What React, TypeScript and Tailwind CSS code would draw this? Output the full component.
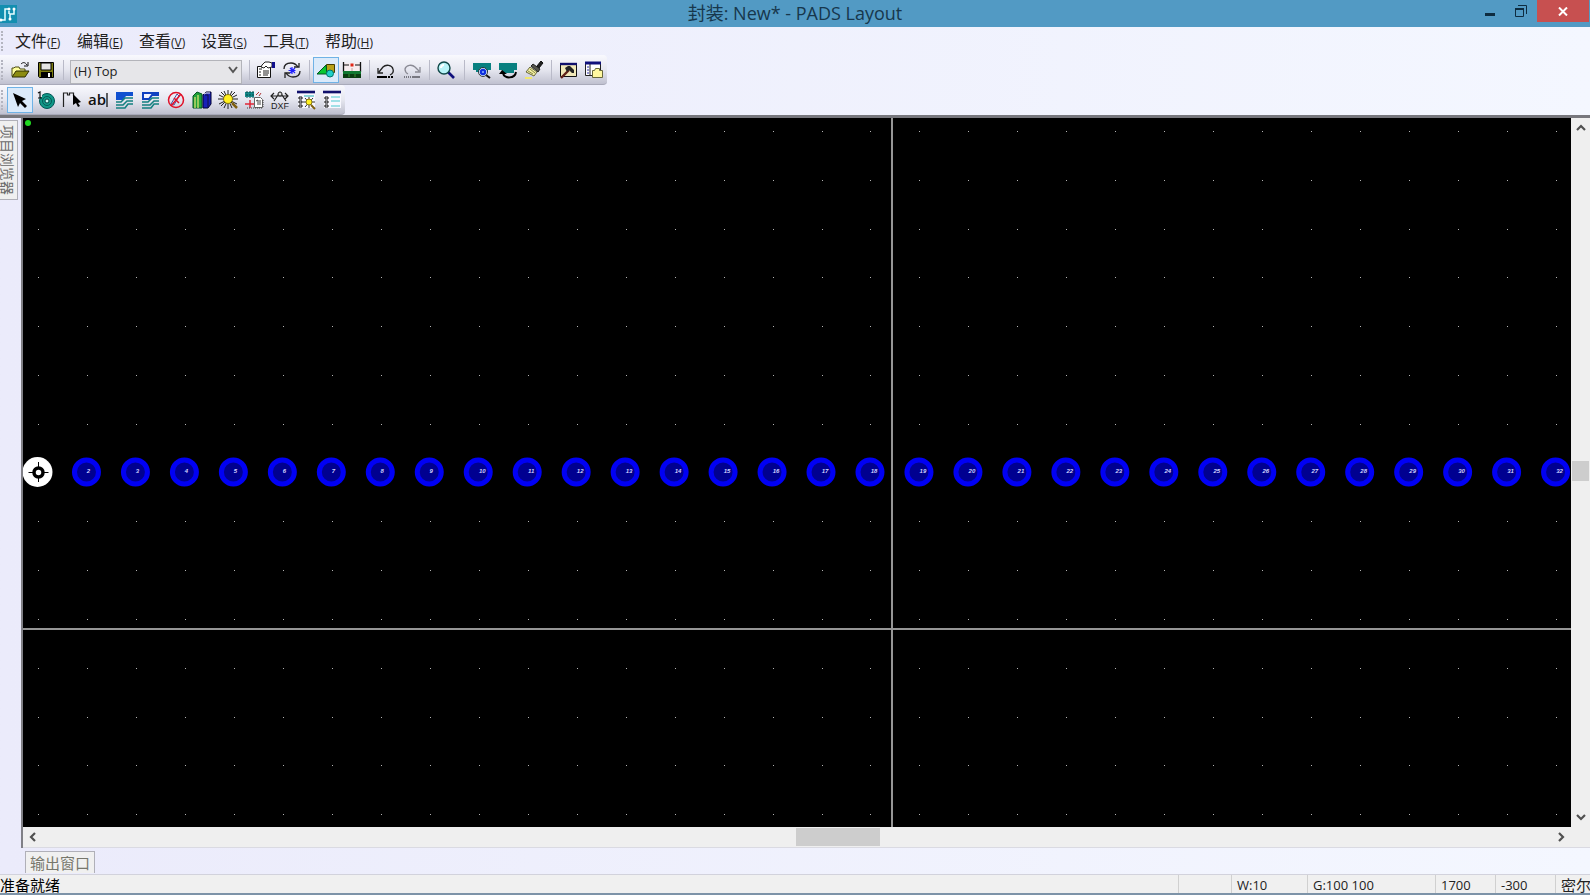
import type { ReactNode } from "react";
import clsx from "clsx";

const menus = [
  { label: "文件", hotkey: "F" },
  { label: "编辑", hotkey: "E" },
  { label: "查看", hotkey: "V" },
  { label: "设置", hotkey: "S" },
  { label: "工具", hotkey: "T" },
  { label: "帮助", hotkey: "H" },
];

const PITCH_X = 48.97;
const PITCH_Y = 48.8;
const ORIGIN = { x: 15, y: 354 };
const PAD_COUNT = 32;

function Icon({ children }: { children: ReactNode }) {
  return (
    <svg width="20" height="20" viewBox="0 0 20 20" fill="none" aria-hidden="true">
      {children}
    </svg>
  );
}

const icons = {
  open: (
    <Icon>
      <path d="M2 16V8h2l1-1h4l1 2h5v3" fill="#ffff9c" stroke="#4c4c10" />
      <path d="M2 17l4-6h13l-4 6z" fill="#8c8c10" stroke="#2c2c00" />
      <path d="M11 4c2-2 4-2 6 1M18 2v4h-4" stroke="#111" />
    </Icon>
  ),
  save: (
    <Icon>
      <path d="M2.500 2.500h15v15h-14l-1-1z" fill="#7c7c10" stroke="#000" />
      <path d="M5 3h10v7H5z" fill="#e4e4e4" stroke="#000" />
      <path d="M5 12h11v5H5z" fill="#000" />
      <path d="M12 13h2v4h-2z" fill="#fff" />
    </Icon>
  ),
  properties: (
    <Icon>
      <path d="M1.500 6.500h13v11h-13z" fill="#fff" stroke="#111" />
      <path d="M3 9h3M3 12h2M3 15h2M7 11h6M7 13h6M7 15h5" stroke="#222" />
      <path d="M6 5l3-3h4l3 1v4l-4 1-2-2-2 2-3-1z" fill="#fff" stroke="#222" />
      <path d="M16 2h3v6h-3z" fill="#10108c" />
    </Icon>
  ),
  cycle: (
    <Icon>
      <path d="M2 9c0-4 3-6 7-6 3 0 5 1 7 4M18 11c0 4-3 6-7 6-3 0-5-1-7-4" stroke="#222" strokeWidth="1.300" />
      <path d="M17 3v4h-5M3 18v-5h5" stroke="#222" strokeWidth="1.300" />
      <path d="M10 7v7M6.500 10.500h7M8 8l5 5M13 8l-5 5" stroke="#2020ff" strokeWidth="1.200" />
    </Icon>
  ),
  drafting: (
    <Icon>
      <path d="M10.500 4.500h8v8h-8z" fill="#b8a018" stroke="#443c00" />
      <path d="M1 14l9-9 1 9z" fill="#08c830" stroke="#052" />
      <circle cx="14" cy="13.500" r="3.500" fill="#20d0c8" stroke="#076" />
    </Icon>
  ),
  board: (
    <Icon>
      <path d="M2 3h16v8H2z" fill="#f6ecee" />
      <path d="M1.500 2v10M18.500 2v10" stroke="#111" strokeWidth="1.300" />
      <path d="M2 5h5M13 5h5" stroke="#111" />
      <path d="M8.500 3.500h3v3h-3z" fill="#e02818" />
      <path d="M10 8v3" stroke="#c8a0a0" />
      <path d="M1 11h18v4H1z" fill="#107830" />
      <path d="M1 14h18v4H1z" fill="#093c10" />
      <path d="M7 14v3M13 14v3" stroke="#38902c" />
    </Icon>
  ),
  undo: (
    <Icon>
      <path d="M2 8v5h5M3 12l4-5c3-3 9-2 10 2 1 3-1 5-3 6" stroke="#222" strokeWidth="1.300" />
      <path d="M1 17h10" stroke="#000" strokeWidth="2" />
      <path d="M12 17h6" stroke="#000" strokeWidth="2" strokeDasharray="2 1" />
    </Icon>
  ),
  redo: (
    <Icon>
      <path d="M18 7v5h-5M17 11l-4-4c-3-3-9-2-10 2 0 2 1 4 3 5" stroke="#8a8a94" strokeWidth="1.300" />
      <path d="M2 17h7" stroke="#777780" strokeWidth="2" strokeDasharray="1 1" />
      <path d="M10 17h8" stroke="#777780" strokeWidth="2" />
    </Icon>
  ),
  zoom: (
    <Icon>
      <path d="M12 12l6 6" stroke="#10107c" strokeWidth="2.600" />
      <circle cx="8" cy="8" r="6" fill="#b8f4f8" stroke="#104848" strokeWidth="1.400" />
      <path d="M5 8c0-2 1-3 3-3" stroke="#fff" strokeWidth="2" />
    </Icon>
  ),
  view: (
    <Icon>
      <path d="M1 3h18v7h-3v2H4v-2H1z" fill="#088080" />
      <path d="M14 15l4 3" stroke="#111" strokeWidth="2" />
      <circle cx="11" cy="12" r="4.500" fill="#d8f0ff" stroke="#111" strokeWidth="0.800" />
      <circle cx="11" cy="12" r="3.200" fill="#1030e0" />
      <circle cx="11" cy="12" r="1" fill="#90b8ff" />
    </Icon>
  ),
  redraw: (
    <Icon>
      <path d="M1 3h18v7h-3v3H4v-3H1z" fill="#088080" />
      <path d="M5 13c1 6 12 6 13-1" stroke="#000" strokeWidth="2" />
      <path d="M1 14l3-4 5 4z" fill="#000" />
    </Icon>
  ),
  brush: (
    <Icon>
      <path d="M13 6l4-5 2 2-4 5z" fill="#222" stroke="#111" />
      <path d="M9 4l7 5-2 3-7-6z" fill="#55554c" stroke="#222" />
      <path d="M6 7l7 5-3 4-8-4z" fill="#f4f0a0" stroke="#66663c" />
      <path d="M4 11l5 3M6 9l5 4" stroke="#88884c" />
      <path d="M1 18h7" stroke="#f0e870" strokeWidth="2" />
    </Icon>
  ),
  hammer: (
    <Icon>
      <path d="M2.500 3.500h16v13h-16z" fill="#f0e8b8" stroke="#111" />
      <path d="M2 4h17" stroke="#10106c" strokeWidth="2.400" />
      <path d="M11 10l-8 8" stroke="#602018" strokeWidth="2.400" />
      <path d="M7 8l3-2h2l4 4v3h-2l-3-3-2 2z" fill="#222" />
    </Icon>
  ),
  windows: (
    <Icon>
      <path d="M1.500 2.500h15v13h-15z" fill="#fff" stroke="#222" />
      <path d="M1 3h16" stroke="#10107c" strokeWidth="3" />
      <path d="M6 4v12" stroke="#222" />
      <path d="M3 7h2M3 10h2M3 13h2" stroke="#2828a0" />
      <path d="M8.500 17.500v-7h2l1-2h4v2h3v7z" fill="#fff8a0" stroke="#68683c" />
    </Icon>
  ),
  pointer: (
    <Icon>
      <path d="M3 3l13 6-4 2 5 5-2 2-5-5-2 4z" fill="#000" />
    </Icon>
  ),
  terminal: (
    <Icon>
      <circle cx="11" cy="11" r="7.500" fill="#109888" stroke="#055" />
      <circle cx="11" cy="11" r="4.500" stroke="#065a58" />
      <circle cx="11" cy="11" r="2" fill="#c8fff8" stroke="#044" />
      <path d="M1 1h5v6H1z" fill="#e8e8f0" />
      <path d="M2 3l2-1v6M2 8h4" stroke="#111" strokeWidth="1.200" />
    </Icon>
  ),
  outline: (
    <Icon>
      <path d="M1.500 17V3h4v2h2V3h4v3" stroke="#222" strokeWidth="1.200" />
      <path d="M11 4l8 8-3 1 2 3-2 1-2-4-3 2z" fill="#000" />
    </Icon>
  ),
  text: (
    <svg width="22" height="20" viewBox="0 0 22 20" aria-hidden="true">
      <text x="1" y="15" fontSize="15" fontWeight="600" fontFamily="Open Sans, sans-serif" fill="#111">
        ab
      </text>
      <path d="M20 3v14" stroke="#111" strokeWidth="1.300" />
    </svg>
  ),
  copper: (
    <Icon>
      <path d="M2 2h17v4h-7l-3 4H2z" fill="#1050d0" />
      <path d="M2 12h5l4-4h8M2 15h7l4-4h6M2 18h9l3-4h5" stroke="#138080" strokeWidth="1.600" />
    </Icon>
  ),
  copperCut: (
    <Icon>
      <path d="M3 3h15v2h-6l-3 4H3z" fill="#f4f4ff" stroke="#1040c0" strokeWidth="2" />
      <path d="M2 12h6l4-4h7M2 15h8l4-4h5M2 18h9l3-4h5" stroke="#138080" strokeWidth="1.600" />
    </Icon>
  ),
  keepout: (
    <Icon>
      <path d="M11 4l2 2-5 9-3-1z" fill="#e8e8f8" stroke="#4850a0" />
      <circle cx="10" cy="10" r="7.500" stroke="#e01028" strokeWidth="1.500" />
      <path d="M15 4L5 16M8 8l5 5" stroke="#e01028" strokeWidth="1.500" />
    </Icon>
  ),
  library: (
    <Icon>
      <path d="M1 6l4-4 5 2v14H1z" fill="#20a038" stroke="#052" />
      <path d="M3 7v11M6 5v13" stroke="#d4e070" strokeWidth="1.300" />
      <path d="M11 5l3-3h5v12l-3 4h-5z" fill="#1820b8" stroke="#003" />
      <path d="M13 5h3v12" stroke="#101048" />
      <path d="M12 4l2-1h4" stroke="#eee" />
    </Icon>
  ),
  spark: (
    <Icon>
      <path d="M10 0v19M0 9h20M3 2l14 14M17 2L3 16M6 1l8 17M14 1L6 18M1 5l18 9M19 5L1 14" stroke="#222" />
      <circle cx="10" cy="9" r="4.500" fill="#fff020" stroke="#887810" />
      <path d="M14 13l5 5" stroke="#806010" strokeWidth="2.500" />
    </Icon>
  ),
  importPart: (
    <Icon>
      <path d="M10.500 7.500h6l2 2v8h-8z" fill="#fff" stroke="#666" />
      <path d="M12 11l2-1v5M16 10v5" stroke="#444" />
      <path d="M1 2h9v5H1z" fill="#148888" />
      <path d="M3 1v7M6 1v7M9 1v7" stroke="#054848" strokeDasharray="2 1" />
      <path d="M1 14h9M6 10v8" stroke="#e02838" strokeWidth="1.500" />
      <path d="M12 5l3-3M15 6l2-3" stroke="#b03838" />
      <path d="M3 18h16M19 10v8" stroke="#444" strokeDasharray="1 1" />
    </Icon>
  ),
  dxf: (
    <Icon>
      <path d="M1 6h17M10 2L4 11M10 2l6 9M4 3L1 6l3 3M15 3l3 3-3 3" stroke="#222" strokeWidth="1.200" />
      <circle cx="10" cy="4" r="2" fill="#ddd" stroke="#222" />
      <text x="1" y="19" fontSize="9" fontFamily="Liberation Sans, sans-serif" fill="#222">
        DXF
      </text>
    </Icon>
  ),
  listFind: (
    <Icon>
      <path d="M2 4h17v14H2z" fill="#f8f8ff" />
      <path d="M1 2h18" stroke="#10106c" strokeWidth="2.600" />
      <path d="M3 7h3v2H3zM3 11h3v2H3zM3 15h3v2H3z" stroke="#111" />
      <path d="M8 6h10" stroke="#20b0b0" />
      <path d="M13 7v11M7 12h12M9 8l8 9M17 8l-8 9" stroke="#333" />
      <circle cx="13" cy="12" r="3" fill="#fff020" stroke="#887810" />
      <path d="M15 15l4 4" stroke="#806010" strokeWidth="2" />
    </Icon>
  ),
  list: (
    <Icon>
      <path d="M2 4h17v14H2z" fill="#f8f8ff" />
      <path d="M1 2h18" stroke="#10106c" strokeWidth="2.600" />
      <path d="M3 7h3v2H3zM3 11h3v2H3zM3 15h3v2H3z" stroke="#111" />
      <path d="M9 7h9M9 11h9M9 16h9" stroke="#48c8d0" strokeWidth="1.200" />
    </Icon>
  ),
};

type IconName = keyof typeof icons;

function ToolButton({ name, active }: { name: IconName; active?: boolean }) {
  return (
    <button
      type="button"
      aria-label={name}
      aria-pressed={active}
      className={clsx(
        "flex h-[26px] w-[26px] shrink-0 items-center justify-center",
        active && "border border-[#6fb2e6] bg-[#dbeafa]",
      )}
    >
      {icons[name]}
    </button>
  );
}

function Separator() {
  return (
    <div className="flex w-2 shrink-0 justify-center">
      <div className="h-5 w-px bg-[#b9bac8]" />
    </div>
  );
}

function Grip() {
  return <div className="mr-1 h-5 w-[3px] shrink-0 border-r-2 border-dotted border-[#b4b5c0]" />;
}

function Toolbar({ children }: { children: ReactNode }) {
  return (
    <div
      role="toolbar"
      className="flex h-[30px] w-fit items-center rounded-r-sm border-b border-[#a9aaba] bg-gradient-to-b from-[#f9f9fe] via-[#e6e7f0] to-[#c0c1d0]"
    >
      {children}
    </div>
  );
}

function TitleBar() {
  return (
    <header className="grid h-[27px] shrink-0 grid-cols-[1fr_auto_1fr] bg-[#529ac4] text-[#17374c]">
      <div className="flex items-center">
        <svg width="17" height="18" viewBox="0 0 17 18" aria-hidden="true">
          <path d="M0 0h17v18H0z" fill="#138fb0" />
          <path d="M0 15h5V4h4M10 13V9h4V4M9 6v3" stroke="#e8ffff" strokeWidth="1.500" fill="none" />
          <circle cx="10" cy="14" r="1.500" fill="#fff" />
          <circle cx="9" cy="4" r="1.500" fill="#fff" />
          <circle cx="14" cy="4" r="1.500" fill="#fff" />
          <circle cx="1" cy="15" r="1.500" fill="#fff" />
        </svg>
      </div>
      <h1 className="text-lg leading-[27px]">封装: New* - PADS Layout</h1>
      <div className="flex items-start justify-end pr-px">
        <button type="button" aria-label="Minimize" className="flex h-[22px] w-[30px] items-center justify-center">
          <svg width="10" height="10" viewBox="0 0 10 10">
            <path d="M0 7h10v3H0z" fill="#0e2c40" />
          </svg>
        </button>
        <button type="button" aria-label="Restore" className="flex h-[22px] w-8 items-center justify-center">
          <svg width="12" height="12" viewBox="0 0 12 12" fill="none" stroke="#0e2c40">
            <path d="M3 .5h8.500v8.500" />
            <path d="M.5 3.500h8v8h-8z" />
            <path d="M0 4h9" strokeWidth="2" />
          </svg>
        </button>
        <button
          type="button"
          aria-label="Close"
          className="flex h-[22px] w-[52px] items-center justify-center bg-[#c75050]"
        >
          <svg width="10" height="9" viewBox="0 0 10 9">
            <path d="M1 .5l8 8M9 .5l-8 8" stroke="#fff" strokeWidth="2" />
          </svg>
        </button>
      </div>
    </header>
  );
}

function MenuBar() {
  return (
    <nav className="flex h-7 items-center">
      <Grip />
      {menus.map((menu) => (
        <button
          key={menu.hotkey}
          type="button"
          className="flex w-[62px] shrink-0 items-baseline whitespace-nowrap pl-2 text-base leading-6 text-[#222]"
        >
          {menu.label}
          <span className="text-xs">
            (<u>{menu.hotkey}</u>)
          </span>
        </button>
      ))}
    </nav>
  );
}

function MainToolbar() {
  return (
    <Toolbar>
      <Grip />
      <ToolButton name="open" />
      <ToolButton name="save" />
      <Separator />
      <div className="relative mx-[3px] h-6 w-[172px] shrink-0">
        <select
          aria-label="Layer"
          className="h-full w-full appearance-none border border-[#b3b4ba] bg-[#e6e6e9] px-[3px] pb-[2px] text-[13px] text-[#222]"
        >
          <option>(H) Top</option>
        </select>
        <svg className="pointer-events-none absolute right-1 top-2" width="10" height="8" viewBox="0 0 10 8">
          <path d="M1 1l4 5 4-5" stroke="#555" strokeWidth="2" fill="none" />
        </svg>
      </div>
      <Separator />
      <ToolButton name="properties" />
      <ToolButton name="cycle" />
      <Separator />
      <ToolButton name="drafting" active />
      <ToolButton name="board" />
      <Separator />
      <ToolButton name="undo" />
      <ToolButton name="redo" />
      <Separator />
      <ToolButton name="zoom" />
      <div className="px-px">
        <Separator />
      </div>
      <ToolButton name="view" />
      <ToolButton name="redraw" />
      <ToolButton name="brush" />
      <Separator />
      <ToolButton name="hammer" />
      <ToolButton name="windows" />
    </Toolbar>
  );
}

const draftingTools: IconName[] = [
  "pointer",
  "terminal",
  "outline",
  "text",
  "copper",
  "copperCut",
  "keepout",
  "library",
  "spark",
  "importPart",
  "dxf",
  "listFind",
  "list",
];

function DraftingToolbar() {
  return (
    <Toolbar>
      <Grip />
      {draftingTools.map((name) => (
        <ToolButton key={name} name={name} active={name === "pointer"} />
      ))}
    </Toolbar>
  );
}

function Canvas() {
  const pads = Array.from({ length: PAD_COUNT }, (_, i) => i + 1);
  // Grid rows run from 7 above the pad row to 7 below it
  const rows = Array.from({ length: 15 }, (_, i) => i - 7).filter((r) => r !== 0);

  return (
    <svg className="h-full w-full bg-black" role="img" aria-label="PCB decal">
      {rows.map((r) =>
        pads.map((n) => (
          <rect
            key={`${r}-${n}`}
            x={Math.round(ORIGIN.x + (n - 1) * PITCH_X)}
            y={Math.round(ORIGIN.y + 0.6 + r * PITCH_Y)}
            width="1"
            height="1"
            fill="#b4b4b4"
          />
        )),
      )}
      <circle cx="5" cy="5" r="3" fill="#20d820" />

      {pads.slice(1).map((n) => {
        const cx = ORIGIN.x - 0.5 + (n - 1) * PITCH_X;
        return (
          <g key={n}>
            <circle cx={cx} cy={ORIGIN.y} r="12" fill="#000090" stroke="#0000f4" strokeWidth="5" />
            <text
              x={cx + (n > 9 ? 4 : 2)}
              y={ORIGIN.y + 1}
              textAnchor="middle"
              fontSize="6"
              fontStyle="italic"
              fontWeight="700"
              fontFamily="Liberation Sans, sans-serif"
              fill="#d4d4ff"
            >
              {n}
            </text>
          </g>
        );
      })}

      <circle cx="14.500" cy="354" r="15" fill="#fff" />
      <path d="M15.500 344v20M5.500 354.500h20" stroke="#000" />
      <circle cx="15.500" cy="354.500" r="4.500" fill="#fff" stroke="#000" strokeWidth="3.500" />

      <path d="M869 0v2000" stroke="#969696" strokeWidth="2" />
      <path d="M0 511h3000" stroke="#969696" strokeWidth="2" />
    </svg>
  );
}

function ScrollArrow({ label, d }: { label: string; d: string }) {
  return (
    <button type="button" aria-label={label} className="flex h-5 w-[19px] shrink-0 items-center justify-center">
      <svg width="10" height="10" viewBox="0 0 10 10">
        <path d={d} stroke="#505050" strokeWidth="2.200" fill="none" />
      </svg>
    </button>
  );
}

function VerticalScrollbar() {
  return (
    <div className="flex w-[19px] shrink-0 flex-col bg-[#efefef]">
      <ScrollArrow label="Scroll up" d="M1 7l4-4 4 4" />
      <div className="flex-[323]" />
      <div className="mx-px flex-[20] bg-[#cdcdcd]" />
      <div className="flex-[326]" />
      <ScrollArrow label="Scroll down" d="M1 3l4 4 4-4" />
    </div>
  );
}

function HorizontalScrollbar() {
  return (
    <div className="flex h-[21px] shrink-0 border-b border-[#dadae2] bg-[#efefef] pr-5">
      <ScrollArrow label="Scroll left" d="M7 1L3 5l4 4" />
      <div className="flex-[753]" />
      <div className="my-px flex-[84] bg-[#cdcdcd]" />
      <div className="flex-[671]" />
      <ScrollArrow label="Scroll right" d="M3 1l4 4-4 4" />
    </div>
  );
}

function StatusCell({ className, children }: { className: string; children?: ReactNode }) {
  return (
    <div className={clsx("shrink-0 whitespace-nowrap border-l border-[#d0d0d0] pl-[5px]", className)}>
      {children}
    </div>
  );
}

function StatusBar() {
  return (
    <footer className="flex h-[21px] shrink-0 border-b-2 border-t border-b-[#7d93a8] border-t-[#d2d2dc] bg-[#f0f0f0] text-[13px] leading-5 text-[#222]">
      <div className="flex-1 text-[15px] text-black">准备就绪</div>
      <StatusCell className="w-[53px]" />
      <StatusCell className="w-[76px]">W:10</StatusCell>
      <StatusCell className="w-32">G:100 100</StatusCell>
      <StatusCell className="w-[60px]">1700</StatusCell>
      <StatusCell className="w-[60px]">-300</StatusCell>
      <StatusCell className="w-[35px] text-[15px]">密尔</StatusCell>
    </footer>
  );
}

export default function App() {
  return (
    <div className="flex h-screen flex-col overflow-hidden bg-gradient-to-r from-[#ebebfb] to-[#f4f7ff] font-['Open_Sans','Noto_Sans_CJK_SC',sans-serif]">
      <TitleBar />
      <div className="shrink-0 border-b-[3px] border-[#77777d]">
        <MenuBar />
        <MainToolbar />
        <DraftingToolbar />
      </div>
      <main className="flex min-h-0 flex-1">
        <aside className="w-[21px] shrink-0 pt-[2px]">
          <button
            type="button"
            className="flex h-20 w-[18px] items-center justify-center border border-l-0 border-[#b0b0b8] bg-[#f0f0f0] pr-[3px] text-sm leading-[14px] text-[#6b6b6b] [text-orientation:sideways] [writing-mode:vertical-rl]"
          >
            项目浏览器
          </button>
        </aside>
        <div className="flex min-w-0 flex-1 flex-col border-l-2 border-[#808086]">
          <div className="flex min-h-0 flex-1">
            <div className="min-w-0 flex-1">
              <Canvas />
            </div>
            <VerticalScrollbar />
          </div>
          <HorizontalScrollbar />
        </div>
      </main>
      <div className="flex h-[26px] shrink-0 items-end pb-px pl-[25px]">
        <button
          type="button"
          className="h-[22px] border border-b-0 border-[#b0b0b8] bg-[#f0f0f0] px-1 text-[15px] leading-5 text-[#77776c]"
        >
          输出窗口
        </button>
      </div>
      <StatusBar />
    </div>
  );
}
